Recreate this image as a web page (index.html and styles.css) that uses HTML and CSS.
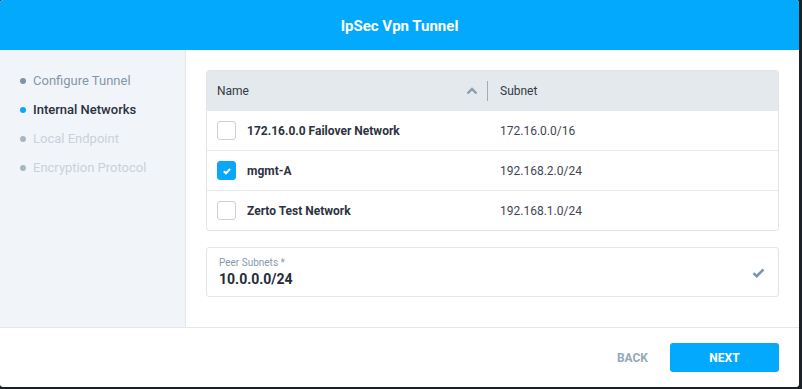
FILE: index.html
```html
<!DOCTYPE html>
<html lang="en">
<head>
    <meta charset="UTF-8">
    <title>IpSec Vpn Tunnel</title>
    <link rel="stylesheet" href="styles.css">
</head>
<body>
    <div class="dialog">
        <div class="dialog-header">IpSec Vpn Tunnel</div>

        <div class="dialog-main">
            <ul class="steps">
                <li class="done">Configure Tunnel</li>
                <li class="active">Internal Networks</li>
                <li>Local Endpoint</li>
                <li>Encryption Protocol</li>
            </ul>

            <div class="content">
                <div class="grid">
                    <div class="grid-head">
                        <div class="col-name">
                            Name
                            <svg class="sort" width="12" height="8" viewBox="0 0 12 8">
                                <path d="M1.5 6.5L6 2l4.5 4.5" fill="none" stroke="currentColor" stroke-width="2.4"></path>
                            </svg>
                        </div>
                        <div class="col-subnet">Subnet</div>
                    </div>
                    <div class="grid-row">
                        <div class="col-name"><span class="check"></span>172.16.0.0 Failover Network</div>
                        <div class="col-subnet">172.16.0.0/16</div>
                    </div>
                    <div class="grid-row">
                        <div class="col-name">
                            <span class="check checked">
                                <svg width="10" height="10" viewBox="0 0 10 10">
                                    <path d="M1.8 5.2l2.2 2.1 4.2-4.4" fill="none" stroke="#fff" stroke-width="2"></path>
                                </svg>
                            </span>mgmt-A
                        </div>
                        <div class="col-subnet">192.168.2.0/24</div>
                    </div>
                    <div class="grid-row">
                        <div class="col-name"><span class="check"></span>Zerto Test Network</div>
                        <div class="col-subnet">192.168.1.0/24</div>
                    </div>
                </div>

                <div class="field">
                    <div class="field-text">
                        <label>Peer Subnets *</label>
                        <div class="field-value">10.0.0.0/24</div>
                    </div>
                    <svg class="field-ok" width="13" height="10" viewBox="0 0 13 10">
                        <path d="M1.5 5.2l3.3 3 6.7-6.7" fill="none" stroke="currentColor" stroke-width="2.6"></path>
                    </svg>
                </div>
            </div>
        </div>

        <div class="dialog-footer">
            <button class="btn-back">BACK</button>
            <button class="btn-next">NEXT</button>
        </div>
    </div>
</body>
</html>
```

FILE: styles.css
```css
* {
    margin: 0;
    padding: 0;
    box-sizing: border-box;
}

body {
    background-color: #1c2027;
    font-family: Roboto, "Liberation Sans", sans-serif;
    width: 802px;
    height: 389px;
}

.dialog {
    width: 799px;
    height: 387px;
    background: #fff;
    border-radius: 3px;
    overflow: hidden;
    display: flex;
    flex-direction: column;
}

.dialog-header {
    height: 50px;
    flex-shrink: 0;
    background: #03a9fd;
    color: #fff;
    font-weight: 700;
    font-size: 15px;
    display: flex;
    align-items: center;
    justify-content: center;
    padding-top: 1px;
}

.dialog-main {
    flex: 1;
    display: flex;
    min-height: 0;
}

.steps {
    list-style: none;
    width: 186px;
    flex-shrink: 0;
    background: #f1f5f9;
    border-right: 1px solid #e3e8ed;
    padding: 16px 0 0 20px;
}

.steps li {
    height: 29px;
    line-height: 29px;
    font-size: 13px;
    color: #c9d1d9;
    display: flex;
    align-items: center;
    gap: 7px;
}

.steps li::before {
    content: "";
    width: 6px;
    height: 6px;
    border-radius: 50%;
    background: #a9b6c2;
}

.steps li.done {
    color: #8696a7;
}

.steps li.done::before {
    background: #8192a3;
}

.steps li.active {
    color: #2a303d;
    font-weight: 500;
}

.steps li.active::before {
    background: #0aa6f7;
}

.content {
    flex: 1;
    padding: 20px 20px 0 20px;
}

.grid {
    border: 1px solid #e1e6eb;
    border-radius: 3px;
    overflow: hidden;
}

.grid-head,
.grid-row {
    height: 40px;
    display: flex;
    align-items: center;
    font-size: 12px;
}

.grid-head {
    background: #e4e9ee;
    color: #333a44;
    height: 39px;
}

.grid-row {
    border-top: 1px solid #e6eaee;
    color: #3f4652;
}

.col-name {
    width: 281px;
    padding-left: 10px;
    display: flex;
    align-items: center;
}

.grid-head .col-name {
    justify-content: space-between;
    padding-right: 9px;
    height: 20px;
    border-right: 1px solid #9eadbb;
}

.grid-row .col-name {
    font-weight: 700;
    color: #2d3340;
}

.col-subnet {
    padding-left: 12px;
}

.sort {
    color: #8a9db0;
}

.check {
    width: 19px;
    height: 19px;
    border: 1px solid #c9d1da;
    border-radius: 3px;
    margin-right: 11px;
    display: flex;
    align-items: center;
    justify-content: center;
}

.check.checked {
    background: #0aa6f7;
    border-color: #0aa6f7;
}

.field {
    margin-top: 16px;
    height: 50px;
    border: 1px solid #e1e6eb;
    border-radius: 3px;
    display: flex;
    align-items: center;
    justify-content: space-between;
    padding: 0 13px 0 12px;
}

.field-text label {
    display: block;
    font-size: 10px;
    color: #8899ab;
    line-height: 12px;
}

.field-value {
    font-size: 14px;
    font-weight: 700;
    color: #262c38;
    line-height: 18px;
    margin-top: 1px;
}

.field-ok {
    color: #7f95aa;
    margin-top: 2px;
}

.dialog-footer {
    height: 60px;
    flex-shrink: 0;
    border-top: 1px solid #e3e8ed;
    display: flex;
    align-items: center;
    justify-content: flex-end;
    padding-right: 20px;
    gap: 22px;
}

button {
    font-family: Roboto, "Liberation Sans", sans-serif;
    font-weight: 700;
    font-size: 12px;
    border: none;
    cursor: pointer;
}

.btn-back {
    background: none;
    color: #96a8b9;
}

.btn-next {
    width: 109px;
    height: 29px;
    border-radius: 3px;
    background: #03a9fd;
    color: #fff;
}
```
